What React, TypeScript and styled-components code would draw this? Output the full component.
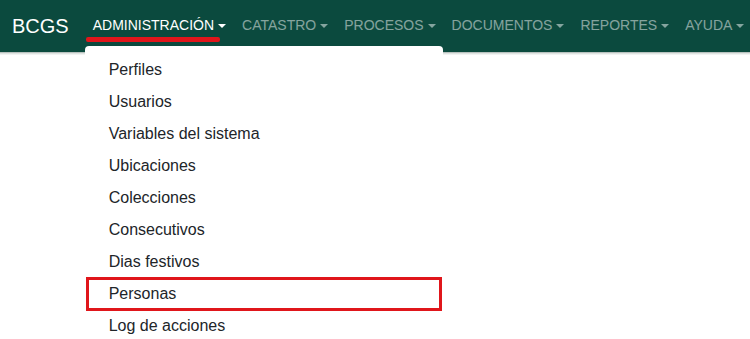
import React from "react";
import styled, { createGlobalStyle } from "styled-components";

const Global = createGlobalStyle`
  html, body { margin: 0; padding: 0; background: #fff; }
  body { font-family: "Liberation Sans", Arial, sans-serif; }
  * { box-sizing: border-box; }
`;

const Page = styled.div`
  position: relative;
  width: 750px;
  height: 339px;
  overflow: hidden;
  background: #fff;
`;

const Navbar = styled.nav`
  display: flex;
  align-items: center;
  height: 52px;
  padding: 0 12px 1px;
  background: #0b4a3e;
  box-shadow: 0 1px 0 #b9c2bf, 0 2px 0 #dfe3e1, 0 3px 0 #f1f3f2;
  white-space: nowrap;
`;

const Brand = styled.span`
  font-size: 20px;
  color: #fff;
  margin-right: 16px;
  line-height: 30px;
`;

const NavList = styled.ul`
  display: flex;
  margin: 0;
  padding: 0;
  list-style: none;
`;

const NavItem = styled.li`
  position: relative;
`;

const NavLink = styled.span<{ $active?: boolean }>`
  display: flex;
  align-items: center;
  padding: 8px 8px;
  font-size: 14px;
  line-height: 21px;
  color: ${(p) => (p.$active ? "#ffffff" : "rgba(255,255,255,0.5)")};
  &::after {
    content: "";
    display: inline-block;
    margin-left: 4px;
    border-top: 4.5px solid currentColor;
    border-left: 4px solid transparent;
    border-right: 4px solid transparent;
  }
`;

const Underline = styled.div`
  position: absolute;
  left: 1px;
  top: 30px;
  width: 134px;
  height: 5px;
  border-radius: 2px;
  background: #e0161b;
`;

const Menu = styled.ul`
  position: absolute;
  left: 0;
  top: 39px;
  width: 358px;
  margin: 0;
  padding: 8px 0;
  list-style: none;
  background: #fff;
  border-radius: 4px;
  z-index: 5;
`;

const MenuItem = styled.li<{ $marked?: boolean }>`
  position: relative;
  padding: 4px 24px;
  font-size: 16px;
  line-height: 24px;
  color: #212529;
  ${(p) =>
    p.$marked
      ? `&::before {
          content: "";
          position: absolute;
          left: 1px;
          right: 1px;
          top: -1px;
          bottom: -1px;
          border: 3px solid #e0161b;
        }`
      : ""}
`;

const items = [
  "Perfiles",
  "Usuarios",
  "Variables del sistema",
  "Ubicaciones",
  "Colecciones",
  "Consecutivos",
  "Dias festivos",
  "Personas",
  "Log de acciones",
];

const navs = ["CATASTRO", "PROCESOS", "DOCUMENTOS", "REPORTES", "AYUDA"];

export default function App() {
  return (
    <Page>
      <Global />
      <Navbar>
        <Brand>BCGS</Brand>
        <NavList>
          <NavItem>
            <NavLink $active>ADMINISTRACIÓN</NavLink>
            <Underline />
            <Menu>
              {items.map((it) => (
                <MenuItem key={it} $marked={it === "Personas"}>
                  {it}
                </MenuItem>
              ))}
            </Menu>
          </NavItem>
          {navs.map((n) => (
            <NavItem key={n}>
              <NavLink>{n}</NavLink>
            </NavItem>
          ))}
        </NavList>
      </Navbar>
    </Page>
  );
}
